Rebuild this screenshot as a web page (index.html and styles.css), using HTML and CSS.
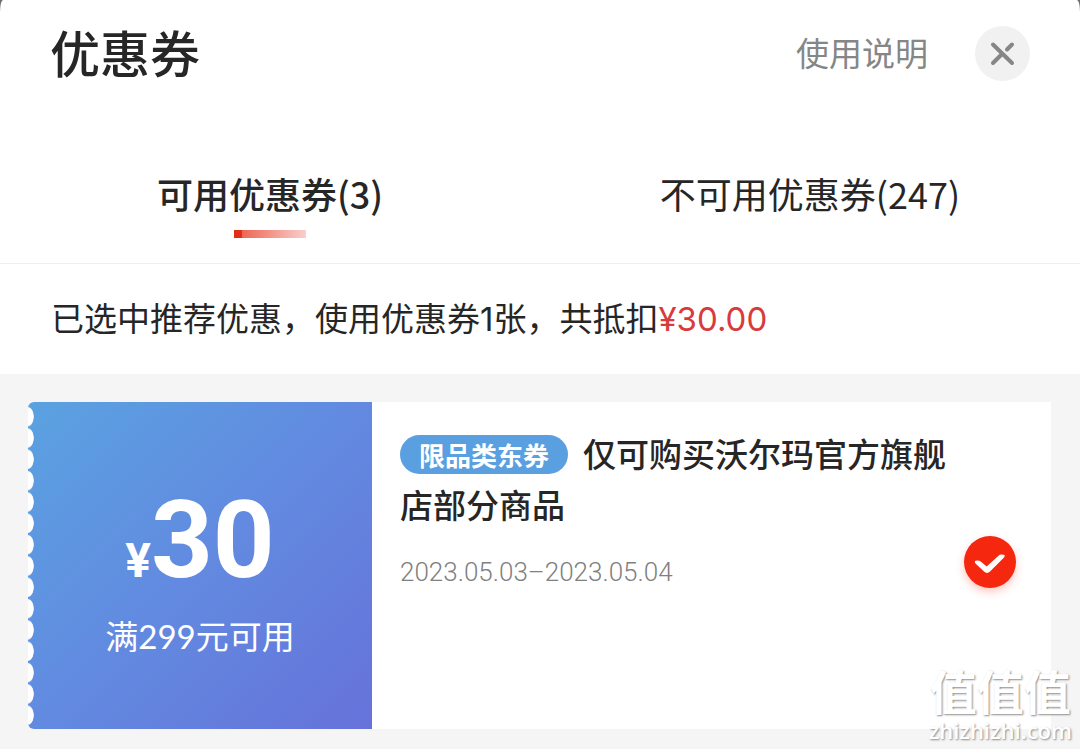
FILE: index.html
```
<!DOCTYPE html>
<html lang="zh-CN">
<head>
<meta charset="utf-8">
<meta name="viewport" content="width=device-width, initial-scale=1">
<title>优惠券</title>
<link rel="stylesheet" href="styles.css">
</head>
<body>
<main class="sheet">
  <header class="header">
    <h1 class="title">优惠券</h1>
    <a class="help" href="#help">使用说明</a>
    <button class="close" type="button" aria-label="关闭">
      <svg width="55" height="55" viewBox="0 0 55 55" fill="none" stroke="#868686" stroke-width="4" stroke-linecap="round">
        <path d="M18 18.500 37 37M18 37l8.500-8.500M32 23.500l5-5"/>
      </svg>
    </button>
  </header>
  <nav class="tabs">
    <button class="tab tab-active" type="button">可用优惠券(3)</button>
    <button class="tab" type="button">不可用优惠券(247)</button>
  </nav>
  <p class="summary">已选中推荐优惠，使用优惠券<span class="count">1</span>张，共抵扣<span class="saving">¥30.00</span></p>
  <section class="list">
    <article class="coupon">
      <div class="value">
        <p class="amount"><span class="yen">¥</span>30</p>
        <p class="condition">满299元可用</p>
      </div>
      <div class="details">
        <div class="info">
          <h2 class="name"><span class="tag">限品类东券</span>仅可购买沃尔玛官方旗舰店部分商品</h2>
          <p class="dates">2023.05.03–2023.05.04</p>
        </div>
        <input class="pick" type="checkbox" aria-label="使用这张优惠券" checked>
        <svg class="tick" width="52" height="52" viewBox="0 0 52 52" aria-hidden="true">
          <path d="M11.500 27.500q-2-3 1.800-3 2.500 0 3.700 1.200l5.700 4.800L34.500 19.800q1.300-1.200 3-1.200 5 0 2.500 2.800L26 35.500q-3 2.800-6 0z" fill="#fff"/>
        </svg>
      </div>
    </article>
  </section>
  <div class="watermark"><span class="mark-name">值值值</span><span class="mark-site">zhizhizhi.com</span></div>
</main>
</body>
</html>
```
FILE: styles.css
```
* { box-sizing: border-box; }

body {
  margin: 0;
  background: #6e6e6e;
  color: #262626;
  font-family: "Noto Sans CJK SC", sans-serif;
}

h1, h2, p { margin: 0; }

button {
  padding: 0;
  border: 0;
  background: none;
  color: inherit;
  font: inherit;
}

.sheet {
  position: relative;
  display: flex;
  flex-direction: column;
  min-height: 100vh;
  overflow: hidden;
  background: #fff;
  border-radius: 3px 3px 0 0 / 12px 12px 0 0;
}

.header {
  display: flex;
  align-items: center;
  padding: 14px 50px;
}

.title {
  flex: 1;
  padding-bottom: 4px;
  font-size: 50px;
  font-weight: 500;
  line-height: 74px;
}

.help {
  margin-right: 47px;
  padding-bottom: 2px;
  color: #868686;
  font-size: 33px;
  font-weight: 400;
  line-height: 48px;
  text-decoration: none;
}

.close {
  display: flex;
  border-radius: 50%;
  background: #f1f1f1;
}

.tabs {
  display: grid;
  grid-template-columns: 1fr 1fr;
  padding-top: 46px;
  border-bottom: 1px solid #efefef;
}

.tab {
  padding: 14px 0 43px;
  font-size: 36px;
  line-height: 54px;
}

.tab-active {
  position: relative;
  font-weight: 500;
}

.tab-active::after {
  content: "";
  position: absolute;
  bottom: 25px;
  left: calc(50% - 36px);
  width: 72px;
  height: 8px;
  background: linear-gradient(90deg, #e22d17 8px, #ee6653 8px, #f9cfcc);
}

.summary {
  padding: 29px 51px 33px;
  font-size: 33px;
  line-height: 48px;
}

.count,
.saving {
  font-family: Inter, sans-serif;
  font-size: 33px;
  line-height: 1;
}

.saving { color: #d93a3c; }

.list {
  flex: 1;
  padding: 28px 29px 20px 28px;
  background: #f5f5f5;
}

.coupon {
  display: flex;
  min-height: 327px;
  background: #fff;
  border-radius: 6px 0 0 6px;
  overflow: hidden;
}

.value {
  position: relative;
  flex: 0 0 344px;
  display: flex;
  flex-direction: column;
  align-items: center;
  padding-top: 86px;
  background: linear-gradient(135deg, #5aa2e0, #628ae0 50%, #6672da);
  color: #fff;
}

/* Perforated edge */
.value::before {
  content: "";
  position: absolute;
  top: 4px;
  bottom: 3px;
  left: 0;
  width: 7px;
  background: radial-gradient(ellipse 6px 10px at 0 50%, #fff 90%, transparent) 0 0 / 7px 21px no-repeat round;
}

.amount {
  font-family: Roboto, sans-serif;
  font-size: 108px;
  font-weight: 700;
  line-height: 104px;
}

.yen {
  font-size: 48px;
  line-height: 1;
}

.condition {
  padding-top: 20px;
  font-family: Lato, "Noto Sans CJK SC", sans-serif;
  font-size: 33px;
  line-height: 48px;
}

.details {
  flex: 1;
  display: grid;
  grid-template-columns: 1fr 52px;
  align-items: center;
  column-gap: 16px;
  padding: 0 35px 8px 28px;
}

.info {
  align-self: start;
  padding-top: 26px;
}

.name {
  font-size: 33px;
  font-weight: 500;
  line-height: 51px;
}

.tag {
  display: inline-block;
  margin-right: 15px;
  padding: 0 19px;
  border-radius: 20px;
  background: #5a9fdf;
  color: #fff;
  font-size: 26px;
  font-weight: 700;
  line-height: 39px;
  vertical-align: 1px;
}

.dates {
  padding-top: 22px;
  color: #808080;
  font-family: Roboto, sans-serif;
  font-size: 26px;
  font-weight: 300;
  line-height: 40px;
}

.pick,
.tick {
  grid-area: 1 / 2;
}

.pick {
  appearance: none;
  width: 52px;
  height: 52px;
  margin: 0;
  border-radius: 50%;
  background: #f5280f;
  box-shadow: 0 4px 8px rgba(245, 40, 15, 0.25);
}

.tick {
  z-index: 1;
  pointer-events: none;
}

.watermark {
  position: absolute;
  right: 8px;
  bottom: 7px;
  display: flex;
  flex-direction: column;
  align-items: center;
  color: #fff;
  text-shadow: 1px 1px 2px #8c8c8c;
}

.mark-name {
  font-size: 47px;
  font-weight: 700;
  line-height: 56px;
}

.mark-site {
  font-family: "Open Sans", sans-serif;
  font-size: 22px;
  font-weight: 600;
  line-height: 24px;
}
```
